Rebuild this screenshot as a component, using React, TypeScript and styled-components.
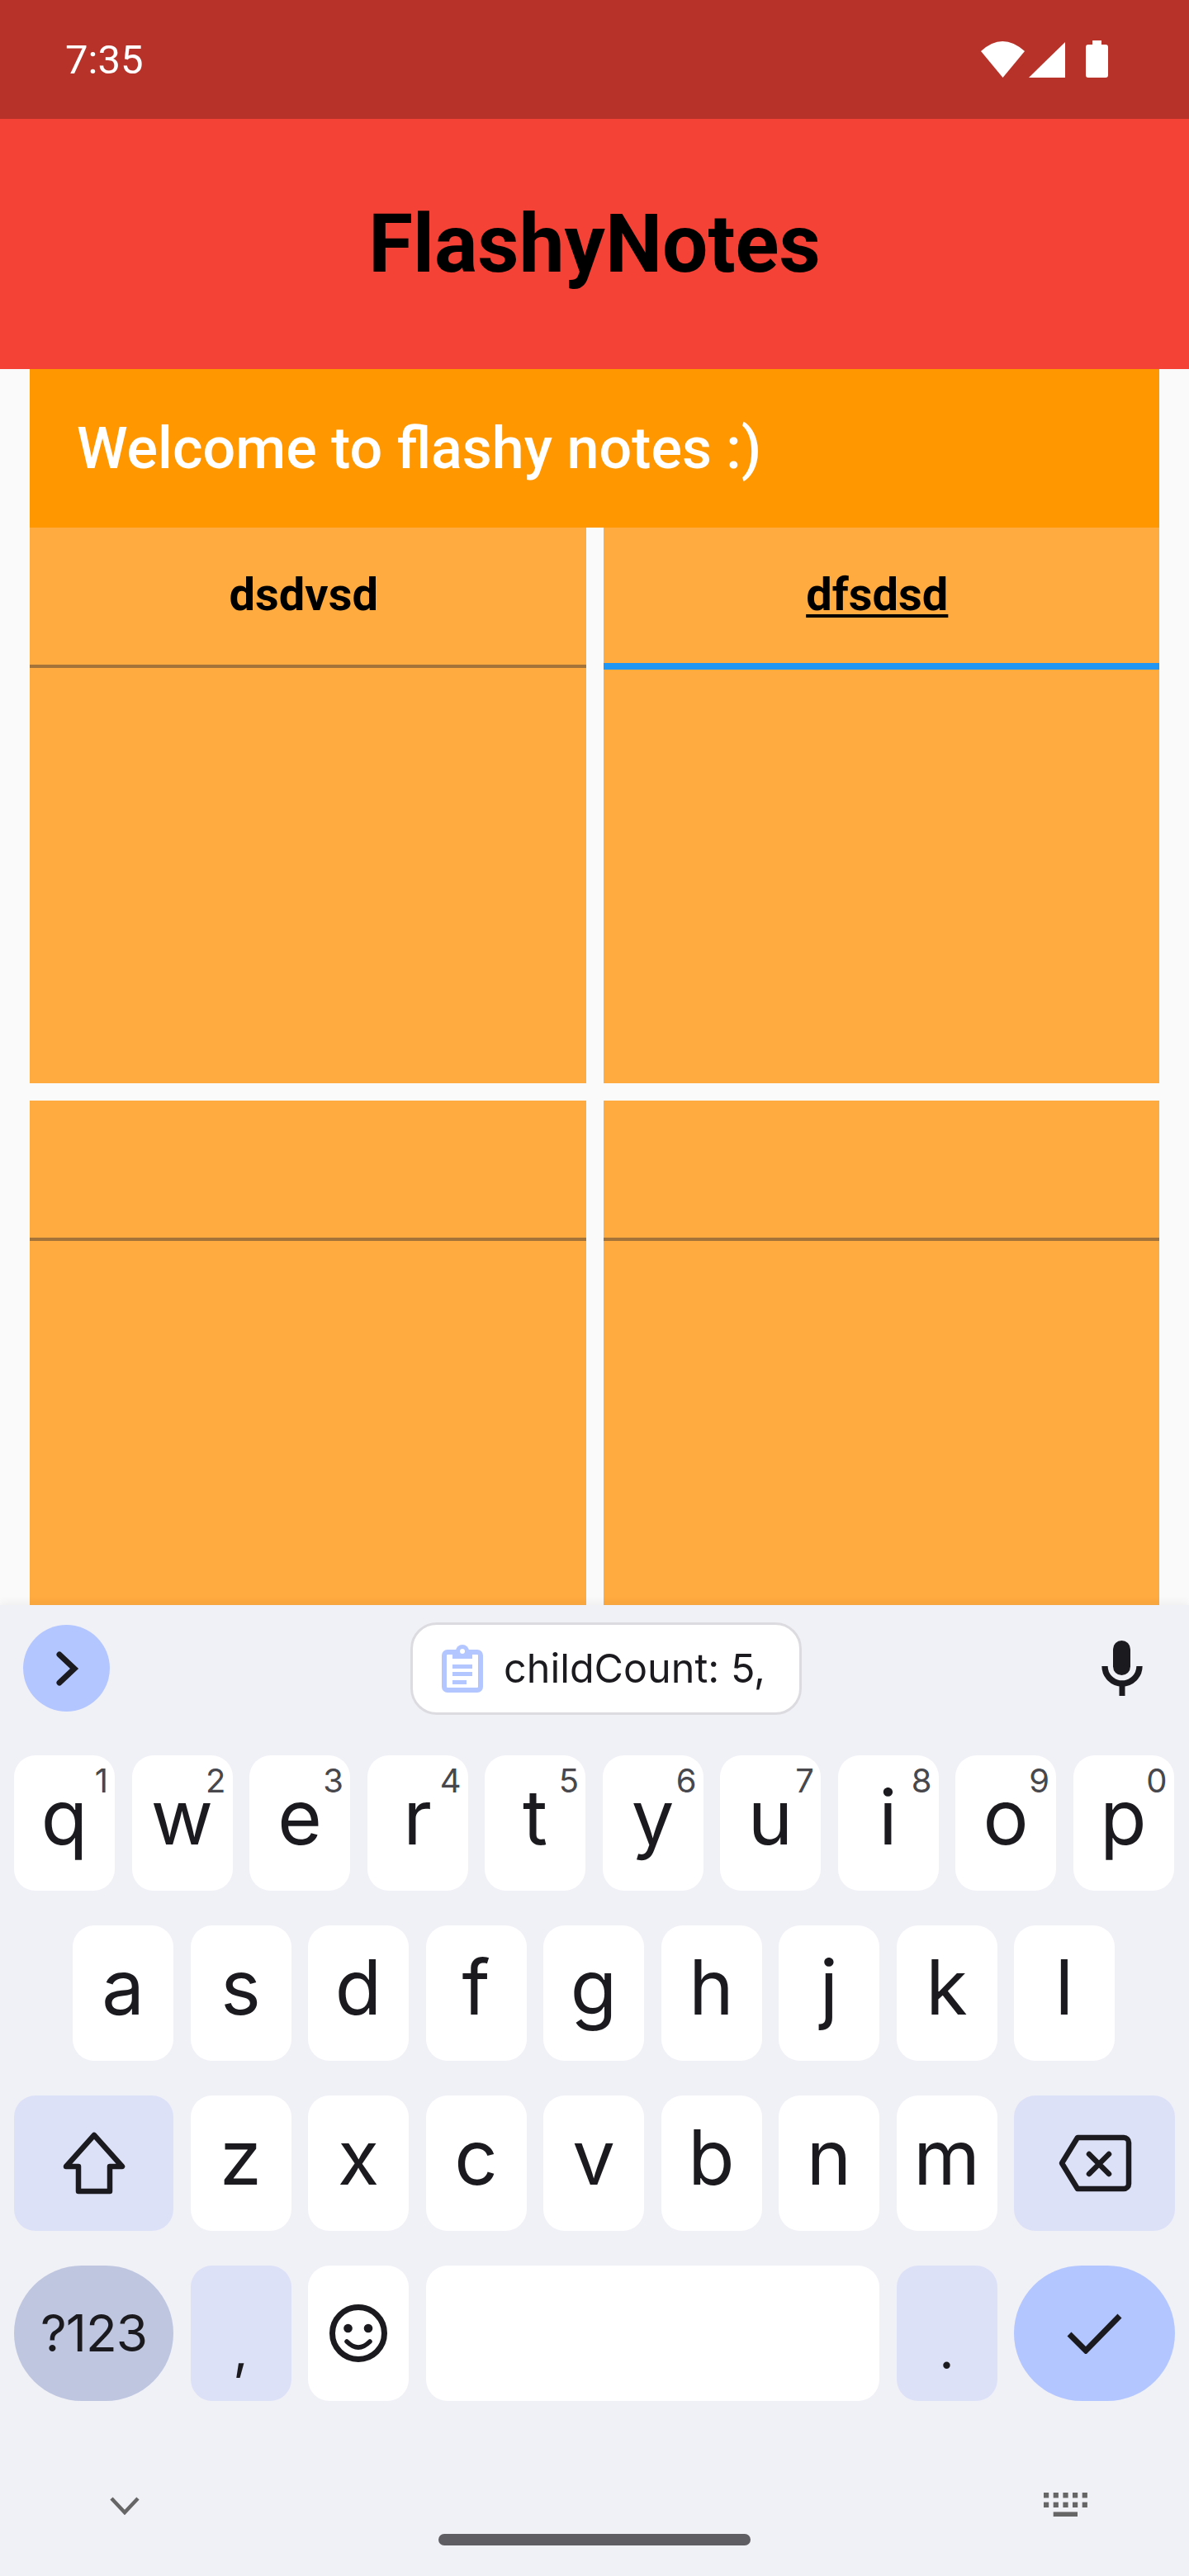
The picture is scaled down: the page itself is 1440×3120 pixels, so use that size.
import React from 'react'
import styled, { createGlobalStyle } from 'styled-components'

const GlobalStyle = createGlobalStyle`
    html, body {
        margin: 0;
        padding: 0;
        background: #fafafa;
    }
    * {
        box-sizing: border-box;
    }
`

const Screen = styled.div`
    display: flex;
    flex-direction: column;
    width: 1440px;
    height: 3120px;
    overflow: hidden;
    background: #fafafa;
    font-family: Roboto, "Liberation Sans", sans-serif;
`

const StatusBar = styled.div`
    flex: none;
    display: flex;
    align-items: center;
    justify-content: space-between;
    height: 144px;
    padding: 0 98px 0 79px;
    background: #b73229;
    color: #fff;
`

const Clock = styled.span`
    font-size: 49px;
    line-height: 56px;
    margin-top: 2px;
`

const StatusIcons = styled.div`
    display: flex;
    align-items: flex-end;
    margin-bottom: 1px;

    & svg {
        display: block;
        fill: #fff;
    }
`

const WifiIcon = styled.svg`
    width: 53px;
    height: 44px;
    margin-right: 5px;
`

const SignalIcon = styled.svg`
    width: 44px;
    height: 43px;
    margin-right: 25px;
`

const BatteryIcon = styled.svg`
    width: 27px;
    height: 45px;
`

const AppBar = styled.header`
    flex: none;
    display: flex;
    align-items: center;
    justify-content: center;
    height: 303px;
    background: #f44336;
`

const AppTitle = styled.h1`
    margin: 0;
    color: #000;
    font-size: 98px;
    font-weight: 700;
    line-height: 112px;
`

const Content = styled.main`
    flex: 1;
    min-height: 0;
    padding: 0 36px;
    overflow: hidden;
`

const Banner = styled.div`
    display: flex;
    align-items: center;
    height: 192px;
    padding-left: 57px;
    background: #ff9800;
    color: #fff;
    font-size: 70px;
    font-weight: 500;
`

const NoteGrid = styled.div`
    display: grid;
    grid-template-columns: 1fr 1fr;
    gap: 21px;
`

const NoteCard = styled.article`
    height: 673px;
    background: #ffab40;
`

const NoteTitle = styled.div<{ $focused?: boolean }>`
    display: flex;
    align-items: center;
    justify-content: center;
    height: ${({ $focused }) => ($focused ? 172 : 170)}px;
    padding: 0 10px ${({ $focused }) => ($focused ? 2 : 4)}px 0;
    border-bottom: ${({ $focused }) => ($focused ? '8px solid #2196f3' : '4px solid #a3733a')};
    color: #000;
    font-size: 56px;
    font-weight: 700;
    text-decoration: ${({ $focused }) => ($focused ? 'underline' : 'none')};
    text-decoration-thickness: 4px;
    text-underline-offset: 5px;
`

const Keyboard = styled.section`
    position: relative;
    flex: none;
    height: 1176px;
    padding: 0 17px;
    background: #f0f0f7;
    color: #1b1b1f;
    font-family: Inter, Roboto, sans-serif;
    box-shadow: 0 -3px 10px rgba(0, 0, 0, 0.05);
`

const Toolbar = styled.div`
    display: flex;
    align-items: center;
    height: 182px;
    padding: 0 0 29px 11px;
`

const ToggleButton = styled.div`
    flex: none;
    display: flex;
    align-items: center;
    justify-content: center;
    width: 105px;
    height: 105px;
    border-radius: 50%;
    background: #b3c6ff;
`

const ClipChip = styled.div`
    flex: none;
    display: flex;
    align-items: center;
    gap: 25px;
    width: 474px;
    height: 112px;
    margin-left: 364px;
    padding-left: 35px;
    border: 3px solid #dcdce0;
    border-radius: 32px;
    background: #fff;
    font-size: 48.5px;
`

const MicIcon = styled.svg`
    flex: none;
    width: 50px;
    height: 67px;
    margin-left: 363px;
`

const KeyRow = styled.div<{ $inset?: number }>`
    display: flex;
    gap: 20.5px;
    height: 164px;
    margin-bottom: 42px;
    padding-left: ${({ $inset }) => $inset || 0}px;

    &:last-of-type {
        height: 166px;
        margin-bottom: 0;
    }
`

const toneColors = {
    plain: '#fff',
    soft: '#dde1f7',
    muted: '#bfc6df',
    accent: '#b3c6ff'
}

const Key = styled.div<{ $tone?: keyof typeof toneColors, $width?: number, $grow?: boolean, $pill?: boolean }>`
    position: relative;
    flex: ${({ $grow }) => ($grow ? '1' : 'none')};
    display: flex;
    align-items: center;
    justify-content: center;
    width: ${({ $width }) => $width || 122}px;
    border-radius: ${({ $pill }) => ($pill ? '83px' : '26px')};
    background: ${({ $tone }) => toneColors[$tone || 'plain']};
`

const Letter = styled.span`
    font-size: 92px;
    font-weight: 400;
    line-height: 58px;
    margin-bottom: 14px;
`

const Hint = styled.span`
    position: absolute;
    top: 17px;
    right: 8px;
    color: #47474c;
    font-size: 40px;
    line-height: 28px;
`

const SymbolsLabel = styled.span`
    font-size: 62px;
    letter-spacing: -1px;
    line-height: 70px;
`

const Punctuation = styled.span`
    font-size: 64px;
    line-height: 64px;
    margin-top: 40px;
`

const NavIcons = styled.div`
    display: flex;
    align-items: center;
    justify-content: space-between;
    height: 29px;
    margin-top: 111px;
    padding: 0 106px 0 116px;
`

const HideIcon = styled.svg`
    width: 36px;
    height: 22px;
    margin-top: 2px;
`

const HomeBar = styled.div`
    width: 378px;
    height: 14px;
    margin: 21px auto 0;
    border-radius: 7px;
    background: #5f5f63;
`

const topRow = ['q', 'w', 'e', 'r', 't', 'y', 'u', 'i', 'o', 'p']
const middleRow = ['a', 's', 'd', 'f', 'g', 'h', 'j', 'k', 'l']
const bottomRow = ['z', 'x', 'c', 'v', 'b', 'n', 'm']

export default function App() {
    return (
        <Screen>
            <GlobalStyle />
            <StatusBar>
                <Clock>7:35</Clock>
                <StatusIcons>
                    <WifiIcon viewBox="0 0 53 44">
                        <path d="M0 12 Q26 -12 53 12 L26.5 44 Z" />
                    </WifiIcon>
                    <SignalIcon viewBox="0 0 44 43">
                        <path d="M44 0 V43 H0 Z" />
                    </SignalIcon>
                    <BatteryIcon viewBox="0 0 27 45">
                        <path d="M8 0 H19 V5 H24 Q27 5 27 8 V42 Q27 45 24 45 H3 Q0 45 0 42 V8 Q0 5 3 5 H8 Z" />
                    </BatteryIcon>
                </StatusIcons>
            </StatusBar>
            <AppBar>
                <AppTitle>FlashyNotes</AppTitle>
            </AppBar>
            <Content>
                <Banner>Welcome to flashy notes :)</Banner>
                <NoteGrid>
                    <NoteCard><NoteTitle>dsdvsd</NoteTitle></NoteCard>
                    <NoteCard><NoteTitle $focused>dfsdsd</NoteTitle></NoteCard>
                    <NoteCard><NoteTitle /></NoteCard>
                    <NoteCard><NoteTitle /></NoteCard>
                </NoteGrid>
            </Content>
            <Keyboard>
                <Toolbar>
                    <ToggleButton>
                        <svg width="30" height="44" viewBox="0 0 30 44" fill="none">
                            <path d="M6 5 L24 22 L6 39" stroke="#1b1b1f" strokeWidth="7" strokeLinecap="round" />
                        </svg>
                    </ToggleButton>
                    <ClipChip>
                        <svg width="50" height="58" viewBox="0 0 50 58">
                            <rect x="3" y="9" width="44" height="46" rx="4" fill="none" stroke="#b3c6ff" strokeWidth="6" />
                            <rect x="13" y="6" width="24" height="11" fill="#b3c6ff" />
                            <circle cx="25" cy="8" r="8" fill="#b3c6ff" />
                            <circle cx="25" cy="8" r="3" fill="#fff" />
                            <rect x="13" y="24" width="24" height="5" fill="#b3c6ff" />
                            <rect x="13" y="33" width="24" height="5" fill="#b3c6ff" />
                            <rect x="13" y="43" width="17" height="5" fill="#b3c6ff" />
                        </svg>
                        childCount: 5,
                    </ClipChip>
                    <MicIcon viewBox="0 0 50 67">
                        <rect x="14" y="0" width="21" height="42" rx="10.5" fill="#1b1b1f" />
                        <path d="M4 31 a21 21 0 0 0 42 0" fill="none" stroke="#1b1b1f" strokeWidth="7.3" />
                        <rect x="21.5" y="52" width="7" height="15" fill="#1b1b1f" />
                    </MicIcon>
                </Toolbar>
                <KeyRow>
                    {topRow.map((letter, index) =>
                        <Key key={letter}>
                            <Letter>{letter}</Letter>
                            <Hint>{(index + 1) % 10}</Hint>
                        </Key>
                    )}
                </KeyRow>
                <KeyRow $inset={71}>
                    {middleRow.map(letter =>
                        <Key key={letter}><Letter>{letter}</Letter></Key>
                    )}
                </KeyRow>
                <KeyRow>
                    <Key $tone="soft" $width={193}>
                        <svg width="80" height="78" viewBox="0 0 80 78" fill="none">
                            <path d="M40 5 L74 43 H59 V73 H21 V43 H6 Z" stroke="#1b1b1f" strokeWidth="6.5" strokeLinejoin="round" />
                        </svg>
                    </Key>
                    {bottomRow.map(letter =>
                        <Key key={letter}><Letter>{letter}</Letter></Key>
                    )}
                    <Key $tone="soft" $grow>
                        <svg width="90" height="70" viewBox="0 0 90 70" fill="none" stroke="#1b1b1f" strokeWidth="6.5" strokeLinejoin="round" strokeLinecap="round">
                            <path d="M24 4 H80 a6 6 0 0 1 6 6 V60 a6 6 0 0 1 -6 6 H24 L5 35 Z" />
                            <path d="M38 24 L62 48 M62 24 L38 48" />
                        </svg>
                    </Key>
                </KeyRow>
                <KeyRow>
                    <Key $tone="muted" $width={193} $pill><SymbolsLabel>?123</SymbolsLabel></Key>
                    <Key $tone="soft"><Punctuation>,</Punctuation></Key>
                    <Key>
                        <svg width="70" height="70" viewBox="0 0 70 70" fill="none">
                            <circle cx="35" cy="35" r="31.5" stroke="#1b1b1f" strokeWidth="7" />
                            <circle cx="22.5" cy="29" r="5.3" fill="#1b1b1f" />
                            <circle cx="47" cy="29" r="5.3" fill="#1b1b1f" />
                            <path d="M21 45 Q35 59 49 45" stroke="#1b1b1f" strokeWidth="5.5" strokeLinecap="round" />
                        </svg>
                    </Key>
                    <Key $grow />
                    <Key $tone="soft"><Punctuation>.</Punctuation></Key>
                    <Key $tone="accent" $width={195} $pill>
                        <svg width="68" height="50" viewBox="0 0 68 50" fill="none">
                            <path d="M3 26 L23 46 L64 4" stroke="#1b1b1f" strokeWidth="7" />
                        </svg>
                    </Key>
                </KeyRow>
                <NavIcons>
                    <HideIcon viewBox="0 0 36 22" fill="none">
                        <path d="M2 2 L18 19 L34 2" stroke="#666" strokeWidth="4.5" />
                    </HideIcon>
                    <svg width="53" height="29" viewBox="0 0 53 29" fill="#666">
                        {[0, 11.7, 23.4, 35, 46.7].map(x =>
                            <React.Fragment key={x}>
                                <rect x={x} y="0" width="6.2" height="6.4" />
                                <rect x={x} y="11.6" width="6.2" height="6.4" />
                            </React.Fragment>
                        )}
                        <rect x="11.7" y="23.4" width="29.3" height="5.6" />
                    </svg>
                </NavIcons>
                <HomeBar />
            </Keyboard>
        </Screen>
    )
}
